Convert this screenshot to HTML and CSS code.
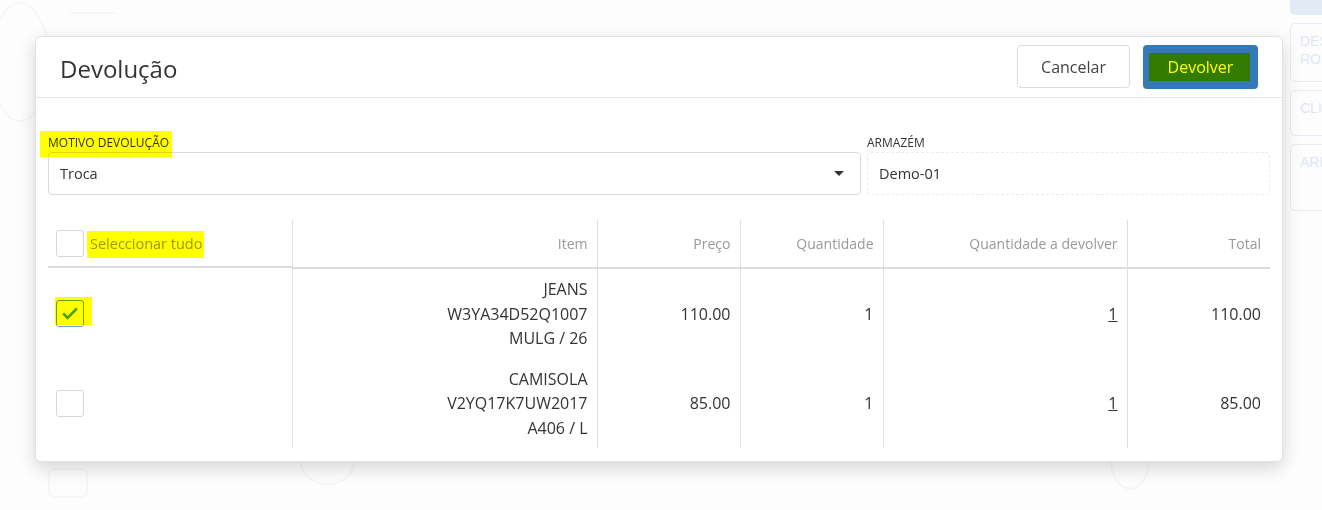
FILE: index.html
```html
<!DOCTYPE html>
<html lang="pt">
<head>
    <meta charset="UTF-8">
    <meta name="viewport" content="width=device-width, initial-scale=1.0">
    <title>Devolução</title>
    <link rel="stylesheet" href="styles.css">
</head>
<body>
    <div class="page">
        <div class="backdrop-art">
            <span class="art a1"></span>
            <span class="art a2"></span>
            <span class="art a3"></span>
            <span class="art a4"></span>
            <span class="art a5"></span>
        </div>
        <div class="sidebar">
            <div class="side-btn"></div>
            <div class="side-card tall">DES<br>ROD</div>
            <div class="side-card">CLIE</div>
            <div class="side-card taller">ARM</div>
        </div>
    </div>

    <div class="overlay">
        <div class="modal">
            <div class="modal-header">
                <h2>Devolução</h2>
                <div class="actions">
                    <button class="btn btn-default">Cancelar</button>
                    <button class="btn btn-primary"><span class="hl hl-btn">Devolver</span></button>
                </div>
            </div>

            <div class="modal-body">
                <div class="form-row">
                    <div class="form-group">
                        <label><span class="hl hl-label">MOTIVO DEVOLUÇÃO</span></label>
                        <div class="select">
                            <span>Troca</span>
                            <span class="caret"></span>
                        </div>
                    </div>
                    <div class="form-group">
                        <label>ARMAZÉM</label>
                        <div class="readonly">Demo-01</div>
                    </div>
                </div>

                <table class="items">
                    <colgroup>
                        <col style="width: 244px">
                        <col style="width: 305px">
                        <col style="width: 143px">
                        <col style="width: 143px">
                        <col style="width: 244px">
                        <col style="width: 143px">
                    </colgroup>
                    <thead>
                        <tr>
                            <th class="check-col">
                                <span class="checkbox"></span>
                                <span class="hl hl-all">Seleccionar tudo</span>
                            </th>
                            <th>Item</th>
                            <th>Preço</th>
                            <th>Quantidade</th>
                            <th>Quantidade a devolver</th>
                            <th>Total</th>
                        </tr>
                    </thead>
                    <tbody>
                        <tr>
                            <td class="check-col">
                                <span class="hl hl-check"><span class="checkbox checked">
                                    <svg viewBox="0 0 16 16" width="20" height="20"><path d="M2.5 8.3l3.6 3.6 7.4-7.6" fill="none" stroke="#4f9a2a" stroke-width="2.2"/></svg>
                                </span></span>
                            </td>
                            <td>JEANS<br>W3YA34D52Q1007<br>MULG / 26</td>
                            <td>110.00</td>
                            <td>1</td>
                            <td><a class="qty">1</a></td>
                            <td>110.00</td>
                        </tr>
                        <tr>
                            <td class="check-col"><span class="checkbox"></span></td>
                            <td>CAMISOLA<br>V2YQ17K7UW2017<br>A406 / L</td>
                            <td>85.00</td>
                            <td>1</td>
                            <td><a class="qty">1</a></td>
                            <td>85.00</td>
                        </tr>
                    </tbody>
                </table>
            </div>
        </div>
    </div>
</body>
</html>
```

FILE: styles.css
```css
* {
    box-sizing: border-box;
}
body {
    margin: 0;
    font-family: "Open Sans", Arial, sans-serif;
    color: #333;
    background-color: #fdfdfd;
    overflow: hidden;
}
.page {
    height: 510px;
    display: flex;
    justify-content: flex-end;
}

/* faded drawings behind the dialog */
.backdrop-art {
    position: absolute;
    inset: 0;
}
.art {
    position: absolute;
    border: 2px solid #f6f6f6;
}
.a1 { left: -10px; top: 2px; width: 60px; height: 120px; border-radius: 50%; }
.a2 { left: 70px; top: 12px; width: 45px; height: 0; border-width: 2px 0 0; }
.a3 { left: 48px; top: 468px; width: 40px; height: 30px; border-radius: 6px; }
.a4 { left: 300px; top: 440px; width: 55px; height: 45px; border-radius: 50%; }
.a5 { left: 1110px; top: 430px; width: 40px; height: 60px; border-radius: 50%; }

.sidebar {
    width: 32px;
    display: flex;
    flex-direction: column;
    gap: 8px;
    overflow: hidden;
    color: #dfe7f3;
    font-family: "Liberation Sans", Arial, sans-serif;
    font-size: 14px;
}
.side-btn {
    height: 16px;
    width: 60px;
    margin-top: -1px;
    background-color: #e2ebf5;
    border-radius: 0 0 0 5px;
}
.side-card {
    width: 60px;
    height: 46px;
    border: 1px solid #e4ebf4;
    border-radius: 5px;
    padding: 8px 0 0 9px;
    line-height: 18px;
}
.side-card.tall { height: 59px; }
.side-card.taller { height: 67px; }

/* dialog */
.overlay {
    position: fixed;
    inset: 0;
    padding: 36px 0 0 35px;
}
.modal {
    width: 1248px;
    background-color: white;
    border: 1px solid #e2e2e2;
    border-radius: 6px;
    box-shadow: 0 6px 18px rgba(0,0,0,0.16);
}
.modal-header {
    height: 61px;
    display: flex;
    align-items: center;
    justify-content: space-between;
    padding: 0 24px 0 24px;
    border-bottom: 1px solid #e5e5e5;
}
.modal-header h2 {
    margin: 0;
    font-size: 24px;
    font-weight: normal;
    color: #333;
    padding-top: 2px;
}
.actions {
    display: flex;
    gap: 13px;
}
.btn {
    font-family: "Open Sans", Arial, sans-serif;
    font-size: 16px;
    height: 43px;
    border-radius: 4px;
    cursor: pointer;
}
.btn-default {
    width: 113px;
    background-color: white;
    border: 1px solid #dcdcdc;
    color: #444;
}
.btn-primary {
    width: 115px;
    height: 44px;
    background-color: #337ab7;
    border: none;
    color: white;
}

.modal-body {
    padding: 38px 12px 13px 12px;
}
.form-row {
    display: grid;
    grid-template-columns: 813px 1fr;
    gap: 6px;
}
label {
    display: block;
    font-size: 12px;
    line-height: 14px;
    color: #333;
    margin-bottom: 2px;
}
.select, .readonly {
    height: 43px;
    display: flex;
    align-items: center;
    justify-content: space-between;
    font-size: 14.5px;
    border-radius: 4px;
}
.select {
    padding: 0 16px 0 11px;
    border: 1px solid #dadada;
}
.caret {
    width: 0;
    height: 0;
    border-left: 5px solid transparent;
    border-right: 5px solid transparent;
    border-top: 5px solid #333;
}
.readonly {
    padding: 0 11px;
    border: 1px dashed #ececec;
}

/* items table */
.items {
    width: 1222px;
    margin-top: 25px;
    border-collapse: collapse;
    table-layout: fixed;
}
.items th {
    height: 46px;
    font-size: 14px;
    font-weight: normal;
    color: #999;
    text-align: right;
    padding: 0 9px;
    border-bottom: 2px solid #dedede;
}
.items td {
    font-size: 16px;
    line-height: 24.5px;
    text-align: right;
    padding: 8px 9px;
    color: #333;
}
.items th + th, .items td + td {
    border-left: 1px solid #dedede;
}
.items .check-col {
    text-align: left;
    padding-left: 8px;
}
.items th.check-col {
    display: flex;
    align-items: center;
    gap: 6px;
    height: 48px;
    font-size: 14.5px;
}
.checkbox {
    display: inline-flex;
    align-items: center;
    justify-content: center;
    width: 28px;
    height: 27px;
    border: 1px solid #d6d6d6;
    border-radius: 3px;
    background-color: white;
    vertical-align: middle;
}
.checkbox.checked {
    border-color: #69a7e2;
}
.qty {
    color: #333;
    text-decoration: underline;
}

/* yellow marker strokes */
.hl {
    position: relative;
    display: inline-block;
}
.hl::after {
    content: '';
    position: absolute;
    background-color: #ffff00;
    mix-blend-mode: multiply;
    pointer-events: none;
}
.hl-label::after { left: -8px; right: -3px; top: -5px; bottom: -7px; }
.hl-all::after { left: -3px; right: -2px; top: -3px; bottom: -5px; }
.hl-btn::after { left: -19px; right: -17px; top: -3px; bottom: -3px; }
.hl-check { line-height: 0; }
.hl-check::after { left: -1px; right: -8px; top: -3px; bottom: 2px; }
```
